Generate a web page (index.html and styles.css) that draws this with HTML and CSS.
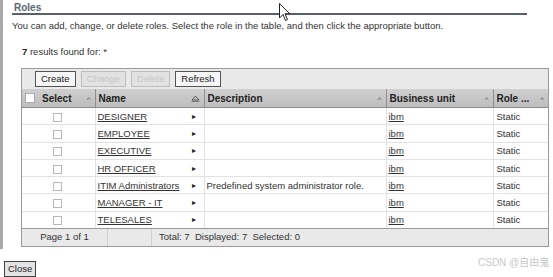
FILE: index.html
```html
<!DOCTYPE html>
<html>
<head>
<meta charset="utf-8">
<link rel="stylesheet" href="styles.css">
</head>
<body>
<div class="panel">
  <div class="title">Roles</div>
  <p class="intro">You can add, change, or delete roles. Select the role in the table, and then click the appropriate button.</p>
  <p class="count"><b>7</b> results found for: *</p>
  <div class="grid">
    <div class="toolbar">
      <span class="btn">Create</span>
      <span class="btn disabled">Change</span>
      <span class="btn disabled">Delete</span>
      <span class="btn">Refresh</span>
    </div>
    <table class="tbl">
      <colgroup>
        <col class="c-sel"><col class="c-name"><col class="c-desc"><col class="c-bu"><col class="c-role">
      </colgroup>
      <thead>
        <tr>
          <th><span class="hcell"><span class="hbox"></span><span class="htext">Select</span><span class="caret">^</span></span></th>
          <th><span class="hcell"><span class="htext">Name</span><svg class="tri" width="9" height="7" viewBox="0 0 9 7"><path d="M1 5 L4.5 1 L8 5 Z" fill="none" stroke="#555" stroke-width="1"/><path d="M0.5 6.5 H8.5" stroke="#777" stroke-width="1"/></svg></span></th>
          <th><span class="hcell"><span class="htext">Description</span><span class="caret">^</span></span></th>
          <th><span class="hcell"><span class="htext">Business unit</span><span class="caret">^</span></span></th>
          <th><span class="hcell"><span class="htext">Role ...</span><span class="caret">^</span></span></th>
        </tr>
      </thead>
      <tbody>
        <tr><td class="sel"><span class="cb"></span></td><td><span class="ncell"><a>DESIGNER</a><span class="arr">&#9656;</span></span></td><td></td><td><a>ibm</a></td><td>Static</td></tr>
        <tr><td class="sel"><span class="cb"></span></td><td><span class="ncell"><a>EMPLOYEE</a><span class="arr">&#9656;</span></span></td><td></td><td><a>ibm</a></td><td>Static</td></tr>
        <tr><td class="sel"><span class="cb"></span></td><td><span class="ncell"><a>EXECUTIVE</a><span class="arr">&#9656;</span></span></td><td></td><td><a>ibm</a></td><td>Static</td></tr>
        <tr><td class="sel"><span class="cb"></span></td><td><span class="ncell"><a>HR OFFICER</a><span class="arr">&#9656;</span></span></td><td></td><td><a>ibm</a></td><td>Static</td></tr>
        <tr><td class="sel"><span class="cb"></span></td><td><span class="ncell"><a>ITIM Administrators</a><span class="arr">&#9656;</span></span></td><td>Predefined system administrator role.</td><td><a>ibm</a></td><td>Static</td></tr>
        <tr><td class="sel"><span class="cb"></span></td><td><span class="ncell"><a>MANAGER - IT</a><span class="arr">&#9656;</span></span></td><td></td><td><a>ibm</a></td><td>Static</td></tr>
        <tr><td class="sel"><span class="cb"></span></td><td><span class="ncell"><a>TELESALES</a><span class="arr">&#9656;</span></span></td><td></td><td><a>ibm</a></td><td>Static</td></tr>
      </tbody>
    </table>
    <div class="footer">
      <span class="f1">Page 1 of 1</span>
      <span class="f2"></span>
      <span class="f3">Total: 7&nbsp;&nbsp;Displayed: 7&nbsp;&nbsp;Selected: 0</span>
    </div>
  </div>
</div>
<div class="bottom">
  <span class="btn close">Close</span>
</div>
<div class="watermark">CSDN @自由鬼</div>
<svg class="cursor" width="12" height="19" viewBox="0 0 12 19"><path d="M0.5 0.5 L0.5 15 L4 11.5 L6.5 17.5 L8.5 16.6 L6 10.8 L10.8 10.8 Z" fill="#fff" stroke="#222" stroke-width="1"/></svg>
</body>
</html>
```
FILE: styles.css
```css
html, body {
  margin: 0;
  padding: 0;
  background: #fff;
}
body {
  width: 553px;
  height: 277px;
  overflow: hidden;
  position: relative;
  font-family: "Liberation Sans", Arial, sans-serif;
  font-size: 9.5px;
  color: #333;
}
.panel {
  border-left: 3px solid #a9a9a9;
  padding-left: 9px;
  height: 249px;
  box-sizing: border-box;
}
.title {
  width: 513px;
  padding: 2px 0 0 2px;
  height: 11px;
  line-height: 11px;
  font-size: 10px;
  font-weight: bold;
  color: #5a6474;
  border-bottom: 2px solid #5a5f70;
}
.intro {
  margin: 4px 0 0 0;
  line-height: 13px;
  color: #333;
}
.count {
  margin: 14px 0 0 10px;
  line-height: 12px;
  color: #333;
}
.count b {
  color: #222;
}
.grid {
  margin: 10px 0 0 9px;
  width: 528px;
  border: 1px solid #9a9a9a;
  box-sizing: border-box;
  background: #e9e9e9;
}
.toolbar {
  display: flex;
  gap: 5px;
  padding: 1px 0 1px 13px;
  height: 20px;
  box-sizing: border-box;
  align-items: center;
}
.btn {
  display: inline-block;
  height: 16px;
  line-height: 14px;
  box-sizing: border-box;
  padding: 0 5px;
  border: 1px solid #555;
  background: #f6f6f6;
  color: #222;
  font-size: 9.5px;
}
.btn.disabled {
  border-color: #bdbdbd;
  background: #e2e2e2;
  color: #c6c6c6;
}
.tbl {
  border-collapse: collapse;
  table-layout: fixed;
  width: 526px;
  background: #fff;
}
.c-sel { width: 73px; }
.c-name { width: 109px; }
.c-desc { width: 182px; }
.c-bu { width: 107px; }
.c-role { width: 55px; }
.tbl th {
  height: 18px;
  padding: 0;
  background: linear-gradient(#cfcfcf, #bdbdbd);
  border-left: 1px solid #f2f2f2;
  border-right: 1px solid #8e8e8e;
  border-bottom: 1px solid #8a8a8a;
  text-align: left;
  font-weight: bold;
  color: #222;
  font-size: 10px;
}
.tbl th:first-child { border-left: none; }
.tbl th:last-child { border-right: none; }
.hcell {
  display: flex;
  align-items: center;
  padding: 0 4px 0 3px;
  height: 17px;
}
.hbox {
  width: 10px;
  height: 10px;
  background: #fff;
  border: 1px solid #aab;
  box-sizing: border-box;
  margin-right: 7px;
}
.htext {
  flex: 1;
  white-space: nowrap;
  overflow: hidden;
}
.caret {
  font-weight: normal;
  color: #555;
  font-size: 8px;
  padding-top: 2px;
}
.tri {
  display: block;
}
.tbl td {
  height: 16.3px;
  padding: 0 2px;
  border-right: 1px solid #e2e2e2;
  border-bottom: 1px solid #e2e2e2;
  white-space: nowrap;
  overflow: hidden;
  color: #333;
}
.tbl td:last-child { border-right: none; padding-left: 3px; }
.tbl tr:last-child td { border-bottom: none; }
.tbl td.sel {
  text-align: center;
}
.cb {
  display: inline-block;
  width: 9px;
  height: 9px;
  border: 1px solid #b8b8b8;
  box-sizing: border-box;
  vertical-align: middle;
  background: #fff;
  margin-left: -2px;
}
.ncell {
  display: flex;
  align-items: center;
  justify-content: space-between;
  padding-left: 0;
  padding-right: 6px;
}
.tbl a {
  color: #333;
  text-decoration: underline;
}
.arr {
  font-size: 8px;
  color: #222;
}
.footer {
  display: flex;
  height: 17px;
  border-top: 1px solid #9a9a9a;
  background: #e9e9e9;
  align-items: stretch;
  line-height: 16px;
}
.f1 {
  width: 85px;
  text-align: center;
  border-right: 1px solid #cfcfcf;
}
.f2 {
  width: 43px;
  border-right: 1px solid #cfcfcf;
}
.f3 {
  padding-left: 7px;
}
.bottom {
  padding: 12px 0 0 4px;
}
.close {
  height: 16px;
  line-height: 14px;
  padding: 0 3px;
  background: #e4e4e4;
  border-color: #444;
}
.watermark {
  position: absolute;
  left: 478px;
  top: 254px;
  font-family: "Liberation Sans", "Noto Sans CJK SC", sans-serif;
  font-size: 10px;
  color: #c8c8c8;
}
.cursor {
  position: absolute;
  left: 279px;
  top: 3px;
}
```
